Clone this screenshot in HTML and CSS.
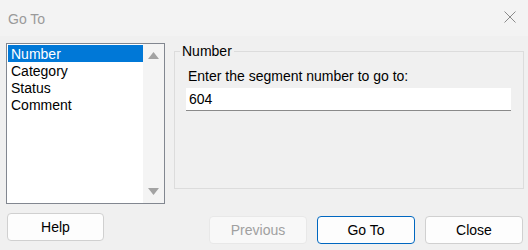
FILE: index.html
```html
<!DOCTYPE html>
<html lang="en">
<head>
    <meta charset="UTF-8">
    <title>Go To</title>
    <link rel="stylesheet" href="styles.css">
</head>
<body>
    <div class="titlebar">
        <span class="title">Go To</span>
        <svg class="close-icon" width="12" height="12" viewBox="0 0 12 12">
            <path d="M0.5 0.5 L11.5 11.5 M11.5 0.5 L0.5 11.5" stroke="#8a8a8a" stroke-width="1" fill="none"/>
        </svg>
    </div>
    <div class="content">
        <div class="listbox">
            <ul class="items">
                <li class="selected">Number</li>
                <li>Category</li>
                <li>Status</li>
                <li>Comment</li>
            </ul>
            <div class="scrollbar">
                <svg width="11" height="7" viewBox="0 0 11 7"><path d="M0 7 L5.5 0 L11 7 Z" fill="#a3a3a3"/></svg>
                <svg width="11" height="7" viewBox="0 0 11 7"><path d="M0 0 L5.5 7 L11 0 Z" fill="#a3a3a3"/></svg>
            </div>
        </div>
        <fieldset class="group">
            <legend>Number</legend>
            <label class="label" for="segment">Enter the segment number to go to:</label>
            <input class="field" id="segment" type="text" value="604">
        </fieldset>
    </div>
    <div class="buttons">
        <button class="button help">Help</button>
        <div class="actions">
            <button class="button" disabled>Previous</button>
            <button class="button primary">Go To</button>
            <button class="button">Close</button>
        </div>
    </div>
</body>
</html>
```

FILE: styles.css
```css
body {
    margin: 0;
    width: 528px;
    height: 250px;
    background-color: #f0f0f0;
    font-family: "Liberation Sans", Arial, sans-serif;
    font-size: 14px;
    color: #000;
    overflow: hidden;
}

.titlebar {
    height: 36px;
    background-color: #f3f3f3;
    display: flex;
    align-items: center;
    justify-content: space-between;
    padding: 0 12px 0 8px;
}

.title {
    color: #9a9a9a;
    font-size: 14px;
    margin-top: 2px;
}

.close-icon {
    margin-top: -2px;
}

.content {
    display: flex;
    padding: 7px 0 0 6px;
}

.listbox {
    width: 157px;
    height: 159px;
    border: 1px solid #828790;
    background-color: #fff;
    display: flex;
}

.items {
    list-style: none;
    margin: 0;
    padding: 1px 0 0 1px;
    flex: 1;
}

.items li {
    height: 17px;
    line-height: 19px;
    padding-left: 3px;
}

.items li.selected {
    background-color: #0078d7;
    color: #fff;
}

.scrollbar {
    width: 21px;
    background-color: #f4f4f4;
    display: flex;
    flex-direction: column;
    justify-content: space-between;
    align-items: center;
    padding: 8px 0 8px;
}

.group {
    margin: 0 0 0 9px;
    width: 325px;
    height: 144px;
    border: 1px solid #dcdcdc;
    padding: 0 12px 0 11px;
}

.group legend {
    padding: 0 2px;
    margin-left: -6px;
    line-height: 16px;
}

.label {
    display: block;
    margin: 9px 0 0 2px;
    line-height: 16px;
}

.field {
    display: block;
    box-sizing: border-box;
    width: 325px;
    height: 23px;
    margin-top: 4px;
    border: none;
    border-bottom: 1px solid #8a8a8a;
    background-color: #fff;
    padding: 0 3px;
    font-family: inherit;
    font-size: 14px;
    color: #000;
}

.buttons {
    display: flex;
    justify-content: space-between;
    padding: 9px 5px 0 7px;
}

.actions {
    display: flex;
    gap: 10px;
    margin-top: 3px;
}

.button {
    width: 98px;
    height: 28px;
    box-sizing: border-box;
    background-color: #fdfdfd;
    border: 1px solid #d0d0d0;
    border-radius: 4px;
    font-family: inherit;
    font-size: 14px;
    color: #000;
    padding: 0;
}

.button.help {
    width: 97px;
}

.button:disabled {
    background-color: #f8f8f8;
    border-color: #e8e8e8;
    color: #a0a0a0;
}

.button.primary {
    border-color: #0067c0;
}
```
